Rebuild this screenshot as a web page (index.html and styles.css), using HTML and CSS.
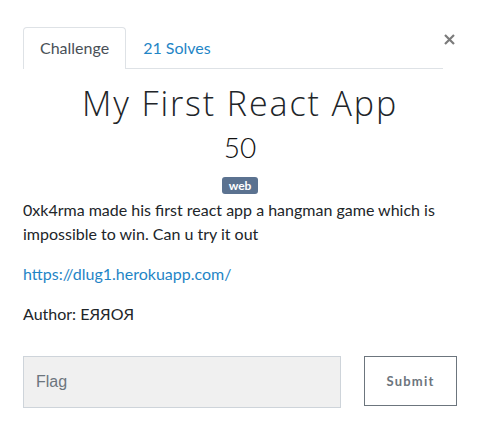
FILE: index.html
```html
<!DOCTYPE html>
<html>
<head>
<meta charset="utf-8">
<link rel="stylesheet" href="styles.css">
</head>
<body>
<div class="modal">
  <div class="header">
    <ul class="tabs">
      <li class="tab active">Challenge</li>
      <li class="tab"><a href="#">21 Solves</a></li>
    </ul>
    <button class="close" aria-label="Close">
      <svg width="11" height="11" viewBox="0 0 11 11"><path d="M1 1L10 10M10 1L1 10" stroke="#7b7b7b" stroke-width="2.2" stroke-linecap="butt"/></svg>
    </button>
  </div>
  <h2 class="title">My First React App</h2>
  <h3 class="value">50</h3>
  <div class="tags"><span class="badge">web</span></div>
  <div class="desc">
    <p>0xk4rma made his first react app a hangman game which is impossible to win. Can u try it out</p>
    <p><a href="#">https://dlug1.herokuapp.com/</a></p>
    <p>Author: EЯЯOЯ</p>
  </div>
  <form class="flag-form">
    <input class="flag-input" type="text" placeholder="Flag">
    <button class="submit" type="button">Submit</button>
  </form>
</div>
</body>
</html>
```
FILE: styles.css
```css
html, body {
  margin: 0;
  padding: 0;
  background: #fff;
}
body {
  font-family: Lato, "Open Sans", sans-serif;
  color: #212529;
}
.modal {
  width: 434px;
  padding: 27px 24px 0 23px;
}
.header {
  display: flex;
  align-items: flex-start;
}
.tabs {
  list-style: none;
  margin: 0;
  padding: 0;
  width: 420px;
  display: flex;
  border-bottom: 1px solid #dee2e6;
}
.tab {
  padding: 8px 16px;
  font-size: 16px;
  line-height: 24px;
  border: 1px solid transparent;
  border-bottom: none;
  border-radius: 4px 4px 0 0;
  margin-bottom: -1px;
}
.tab.active {
  border-color: #dee2e6;
  color: #495057;
  background: #fff;
  padding-bottom: 9px;
}
.tab a {
  color: #1f85c6;
  text-decoration: none;
}
.close {
  margin-left: 1px;
  margin-top: 7px;
  padding: 0;
  border: none;
  background: none;
  width: 11px;
  height: 11px;
  display: block;
}
.close svg { display: block; }
.title {
  margin: 14px 0 0;
  text-align: center;
  font-family: "Open Sans", sans-serif;
  font-weight: 300;
  font-size: 34px;
  line-height: 41px;
  letter-spacing: 1.9px;
  color: #212529;
}
.value {
  margin: 7px 0 0;
  text-align: center;
  font-weight: 300;
  font-size: 28px;
  line-height: 33px;
  color: #111;
}
.tags {
  margin-top: 13px;
  text-align: center;
  height: 17px;
}
.badge {
  display: inline-block;
  background: #5b7290;
  color: #fff;
  font-weight: 700;
  font-size: 12px;
  line-height: 13px;
  padding: 2px 7px;
  border-radius: 3px;
  vertical-align: top;
}
.desc {
  margin-top: 4px;
  width: 420px;
}
.desc p {
  margin: 0 0 16px;
  font-size: 16px;
  line-height: 24px;
  color: #212529;
}
.desc a {
  color: #1f85c6;
  text-decoration: none;
}
.flag-form {
  margin-top: 30px;
  display: flex;
  align-items: flex-start;
  justify-content: space-between;
}
.flag-input {
  box-sizing: border-box;
  width: 318px;
  height: 52px;
  margin: 0;
  padding: 0 12px;
  background: #f0f0f0;
  border: 1px solid #ced4da;
  border-radius: 0;
  font-family: "Liberation Sans", Arial, sans-serif;
  font-size: 16px;
  color: #495057;
}
.flag-input::placeholder {
  color: #6c757d;
  opacity: 1;
}
.submit {
  box-sizing: border-box;
  width: 93px;
  height: 50px;
  margin: 0;
  background: #fff;
  border: 1px solid #6c757d;
  border-radius: 0;
  font-family: Lato, sans-serif;
  font-weight: 700;
  font-size: 13px;
  letter-spacing: 1.2px;
  color: #6c757d;
  padding: 0;
}
```
